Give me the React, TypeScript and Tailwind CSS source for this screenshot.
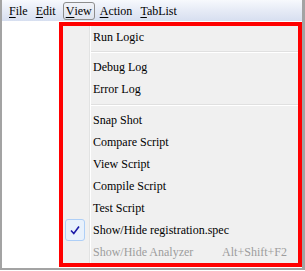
import React from "react";

const U = ({ c }: { c: string }) => <span className="underline underline-offset-[2px]">{c}</span>;

type Item = { label: string; sep?: false; disabled?: boolean; checked?: boolean; shortcut?: string } | { sep: true; h: number };

const items: Item[] = [
  { label: "Run Logic" },
  { sep: true, h: 8 },
  { label: "Debug Log" },
  { label: "Error Log" },
  { sep: true, h: 9 },
  { label: "Snap Shot" },
  { label: "Compare Script" },
  { label: "View Script" },
  { label: "Compile Script" },
  { label: "Test Script" },
  { label: "Show/Hide registration.spec", checked: true },
  { label: "Show/Hide Analyzer", disabled: true, shortcut: "Alt+Shift+F2" },
];

export default function App() {
  return (
    <div
      className="relative w-[305px] h-[271px] bg-white overflow-hidden text-[12px] text-black"
      style={{ fontFamily: '"Liberation Serif", "Times New Roman", serif' }}
    >
      <div className="w-[305px] h-[270px] flex flex-col border-l-[2px] border-r-[3px] border-b-[2px] border-[#a3a3a3]">
        <div className="h-[21px] flex items-center bg-gradient-to-b from-[#f7f9fd] via-[#e6ebf6] to-[#d7dff0] pl-[5px]">
          <div className="px-[2px] ml-[0px]"><U c="F" />ile</div>
          <div className="px-[2px] ml-[4px]"><U c="E" />dit</div>
          <div className="ml-[5px] h-[18px] mt-[1px] px-[2px] flex items-center rounded-[3px] border border-[#8d8d8d] bg-gradient-to-b from-[#f1f3f8] to-[#dfe4ee]"><U c="V" />iew</div>
          <div className="px-[2px] ml-[3px]"><U c="A" />ction</div>
          <div className="px-[2px] ml-[4px]"><U c="T" />abList</div>
        </div>
        <div className="flex-1 bg-white" />
      </div>

      <div className="absolute left-[59px] top-[22px] w-[243px] h-[245px] border-4 border-[#ff0000] bg-[#f0f0f0]">
        <div className="relative h-full">
          <div className="absolute left-[26px] top-0 bottom-0 w-[1px] bg-[#e2e3e3]" />
          <div className="absolute left-[27px] top-0 bottom-0 w-[1px] bg-white" />
          <div className="relative flex flex-col">
            {items.map((it, i) =>
              it.sep ? (
                <div key={i} style={{ height: it.h }} className="flex flex-col justify-center pl-[28px]">
                  <div className="h-[1px] bg-[#e0e0e0]" />
                  <div className="h-[1px] bg-white" />
                </div>
              ) : (
                <div key={i} className="h-[22px] flex items-center relative">
                  {it.checked && (
                    <div className="absolute left-[2px] top-0 w-[20px] h-[22px] rounded-[3px] border border-[#aecff7] bg-[#e8f1fc] flex items-center justify-center">
                      <svg width="10" height="10" viewBox="0 0 10 10">
                        <path d="M1 5.5 L3.8 8.5 L9 1.5" stroke="#1a1aa8" strokeWidth="1.6" fill="none" />
                      </svg>
                    </div>
                  )}
                  <span className={"pl-[30px] " + (it.disabled ? "text-[#9d9d9d]" : "")}>{it.label}</span>
                  {it.shortcut && (
                    <span className="ml-auto pr-[11px] text-[#9d9d9d]">{it.shortcut}</span>
                  )}
                </div>
              )
            )}
          </div>
        </div>
      </div>
    </div>
  );
}
